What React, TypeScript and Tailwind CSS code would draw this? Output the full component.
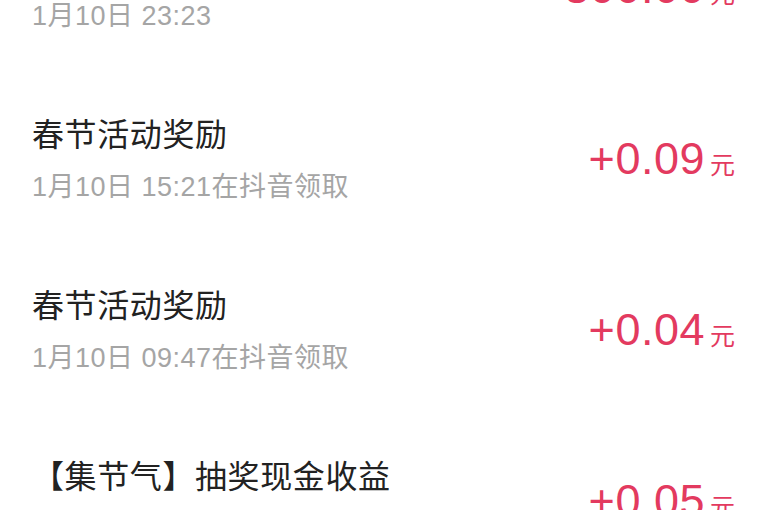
import React from "react";

type Row = { title: string; date: string; amount: string };

const rows: Row[] = [
  { title: "春节活动奖励", date: "1月10日 23:23", amount: "+300.00" },
  { title: "春节活动奖励", date: "1月10日 15:21在抖音领取", amount: "+0.09" },
  { title: "春节活动奖励", date: "1月10日 09:47在抖音领取", amount: "+0.04" },
  { title: "【集节气】抽奖现金收益", date: "1月10日 09:30在抖音领取", amount: "+0.05" },
];

export default function App() {
  return (
    <div
      className="w-[768px] h-[510px] overflow-hidden bg-white"
      style={{ fontFamily: '"Liberation Sans", "Noto Sans CJK SC", sans-serif' }}
    >
      <div className="-mt-[97px] flex flex-col">
        {rows.map((r, i) => (
          <div
            key={i}
            className="h-[171px] flex items-center justify-between pl-[32px] pr-[33px]"
          >
            <div className="flex flex-col">
              <div className="text-[32px] leading-[36px] text-[#222222] tracking-[0.6px]">
                {r.title}
              </div>
              <div className="mt-[19px] text-[27px] leading-[30px] text-[#a5a5a5] tracking-[0.5px]">
                {r.date}
              </div>
            </div>
            <div className="flex items-baseline text-[#e33a5f]">
              <span className="text-[45px] leading-[48px] tracking-[0.5px]">{r.amount}</span>
              <span className="ml-[5px] text-[25px]">元</span>
            </div>
          </div>
        ))}
      </div>
    </div>
  );
}
